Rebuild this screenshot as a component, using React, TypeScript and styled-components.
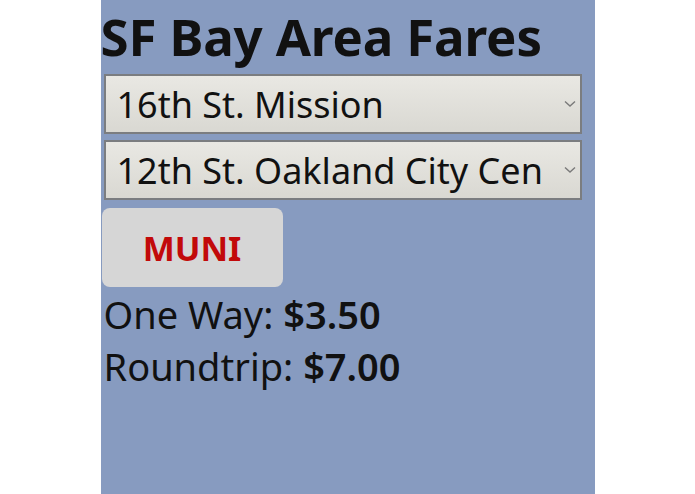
import React from "react";
import styled, { createGlobalStyle } from "styled-components";

const Global = createGlobalStyle`
  html, body { margin: 0; padding: 0; background: #ffffff; }
  body { font-family: "Noto Sans", "Open Sans", sans-serif; }
`;

const Panel = styled.div`
  width: 494px;
  height: 494px;
  margin: 0 auto;
  background: #879bc0;
  display: flex;
  flex-direction: column;
  box-sizing: border-box;
  padding: 4px 0 0 0;
`;

const Title = styled.h1`
  margin: 0;
  font-size: 51px;
  font-weight: 700;
  line-height: 64px;
  color: #111;
  letter-spacing: -0.15px;
`;

const Field = styled.div`
  position: relative;
  margin: 6px 13px 0 3px;
  height: 60px;
  box-sizing: border-box;
  border: 2px solid #7b7d80;
  background: linear-gradient(#e9e8e3, #d9d8d2);
  display: flex;
  align-items: center;
  padding-left: 11px;
  overflow: hidden;
  font-size: 36px;
  color: #111;
  white-space: nowrap;
`;

const Label = styled.span`
  flex: 1;
  margin-right: 26px;
`;

const Chevron = styled.svg`
  position: absolute;
  right: 4px;
  top: 50%;
  margin-top: -4px;
  width: 12px;
  height: 8px;
`;

const Button = styled.button`
  margin: 8px 0 0 1px;
  width: 181px;
  height: 79px;
  border: none;
  border-radius: 8px;
  background: #d6d6d6;
  color: #c20a0a;
  font-family: "Noto Sans", "Open Sans", sans-serif;
  font-weight: 700;
  font-size: 34px;
  padding: 0;
`;

const Line = styled.div`
  margin: 2px 0 0 3px;
  font-size: 38px;
  line-height: 50px;
  color: #111;
`;

const Price = styled.span`
  font-weight: 600;
`;

const Chev = () => (
  <Chevron viewBox="0 0 12 8">
    <path d="M1 1.5 L6 6 L11 1.5" fill="none" stroke="#7a7a7a" strokeWidth="1.4" />
  </Chevron>
);

export default function App() {
  return (
    <>
      <Global />
      <Panel>
        <Title>SF Bay Area Fares</Title>
        <Field>
          <Label>16th St. Mission</Label>
          <Chev />
        </Field>
        <Field>
          <Label>12th St. Oakland City Cen</Label>
          <Chev />
        </Field>
        <div>
          <Button>MUNI</Button>
        </div>
        <Line>
          One Way: <Price>$3.50</Price>
        </Line>
        <Line>
          Roundtrip: <Price>$7.00</Price>
        </Line>
      </Panel>
    </>
  );
}
